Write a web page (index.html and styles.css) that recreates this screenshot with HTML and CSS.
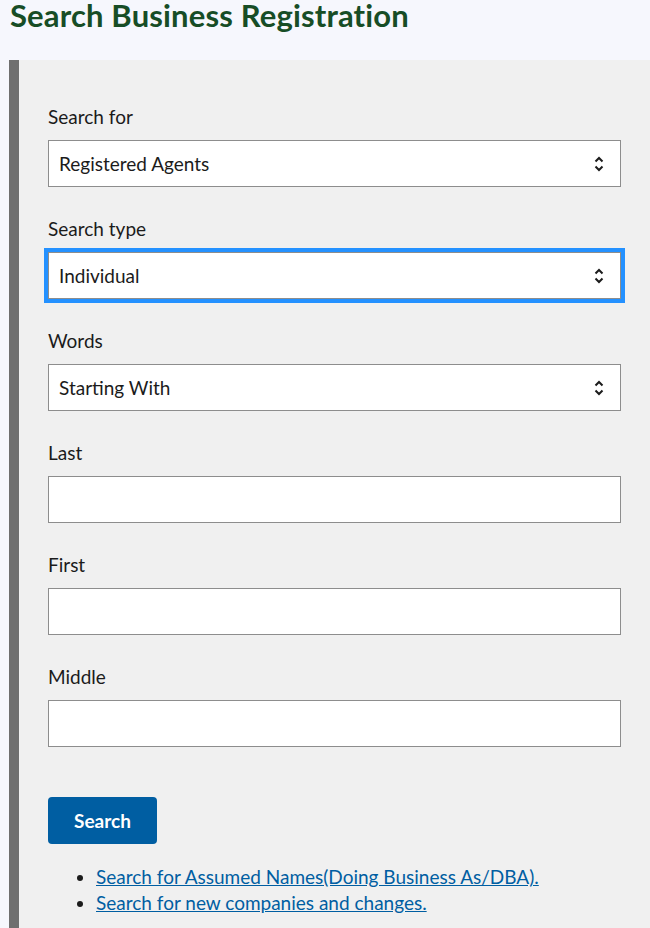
FILE: index.html
```html
<!DOCTYPE html>
<html lang="en">
<head>
<meta charset="utf-8">
<title>Search Business Registration</title>
<link rel="stylesheet" href="styles.css">
</head>
<body>
<h1 class="page-title">Search Business Registration</h1>
<div class="panel">
  <form class="search-form">
    <div class="field">
      <label class="label">Search for</label>
      <div class="select">
        <span class="select-value">Registered Agents</span>
        <svg class="chevrons" width="12" height="18" viewBox="0 0 12 18"><path d="M2.5 6.5 L6 3 L9.5 6.5 M2.5 11.5 L6 15 L9.5 11.5" fill="none" stroke="#1b1b1b" stroke-width="2"/></svg>
      </div>
    </div>
    <div class="field">
      <label class="label">Search type</label>
      <div class="select focused">
        <span class="select-value">Individual</span>
        <svg class="chevrons" width="12" height="18" viewBox="0 0 12 18"><path d="M2.5 6.5 L6 3 L9.5 6.5 M2.5 11.5 L6 15 L9.5 11.5" fill="none" stroke="#1b1b1b" stroke-width="2"/></svg>
      </div>
    </div>
    <div class="field">
      <label class="label">Words</label>
      <div class="select">
        <span class="select-value">Starting With</span>
        <svg class="chevrons" width="12" height="18" viewBox="0 0 12 18"><path d="M2.5 6.5 L6 3 L9.5 6.5 M2.5 11.5 L6 15 L9.5 11.5" fill="none" stroke="#1b1b1b" stroke-width="2"/></svg>
      </div>
    </div>
    <div class="field">
      <label class="label">Last</label>
      <div class="input"></div>
    </div>
    <div class="field">
      <label class="label">First</label>
      <div class="input"></div>
    </div>
    <div class="field">
      <label class="label">Middle</label>
      <div class="input"></div>
    </div>
    <div class="actions">
      <button type="button" class="button">Search</button>
    </div>
    <ul class="links">
      <li><a href="#">Search for Assumed Names(Doing Business As/DBA).</a></li>
      <li><a href="#">Search for new companies and changes.</a></li>
    </ul>
  </form>
</div>
</body>
</html>
```

FILE: styles.css
```css
html, body {
  margin: 0;
  padding: 0;
}
body {
  background: #f6f7fd;
  font-family: Lato, "Noto Sans", sans-serif;
  color: #1b1b1b;
}
.page-title {
  box-sizing: border-box;
  margin: 0;
  height: 60px;
  padding: 0 0 0 10px;
  font-size: 31px;
  line-height: 31px;
  font-weight: 700;
  letter-spacing: 0.15px;
  color: #174d26;
}
.panel {
  margin-left: 9px;
  border-left: 10px solid #6f6f6f;
  background: #f0f0f0;
  padding: 45px 29px 20px 29px;
}
.search-form {
  display: flex;
  flex-direction: column;
}
.field {
  display: flex;
  flex-direction: column;
  margin-bottom: 30px;
}
.label {
  font-size: 19px;
  line-height: 24px;
  margin-bottom: 11px;
  color: #1b1b1b;
}
.select, .input {
  box-sizing: border-box;
  height: 47px;
  background: #fff;
  border: 1px solid #8d8d8d;
}
.select {
  display: flex;
  align-items: center;
  justify-content: space-between;
  padding: 0 15px 0 10px;
}
.select.focused {
  outline: 4px solid #2491ff;
  outline-offset: 0;
}
.select-value {
  font-size: 19px;
  color: #1b1b1b;
}
.chevrons {
  display: block;
}
.actions {
  margin-top: 20px;
}
.button {
  box-sizing: border-box;
  width: 109px;
  height: 47px;
  border: 0;
  border-radius: 4px;
  background: #005ea2;
  color: #fff;
  font-family: Lato, "Noto Sans", sans-serif;
  font-size: 19px;
  font-weight: 700;
}
.links {
  margin: 20px 0 0 0;
  padding-left: 48px;
  font-size: 19px;
  line-height: 26px;
}
.links a {
  color: #005ea2;
}
```
